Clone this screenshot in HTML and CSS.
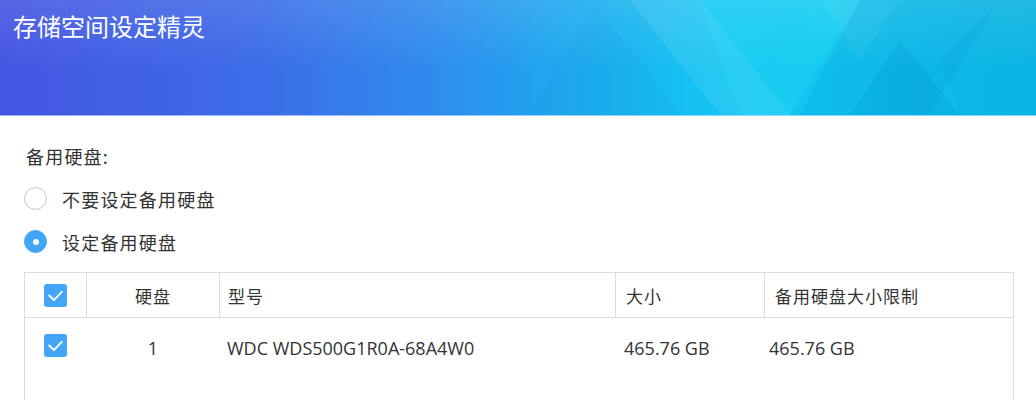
FILE: index.html
```html
<!DOCTYPE html>
<html lang="zh-CN">
<head>
<meta charset="utf-8">
<title>存储空间设定精灵</title>
<link rel="stylesheet" href="styles.css">
</head>
<body>
<header class="banner">
  <svg class="banner-art" viewBox="0 0 1036 115" preserveAspectRatio="none" aria-hidden="true">
    <polygon points="594,5 530,115 680,115 640,60" fill="#0a6fd0" fill-opacity="0.06"/>
    <polygon points="630,0 700,0 790,115 720,115" fill="#ffffff" fill-opacity="0.08"/>
    <polygon points="700,0 860,0 790,115 740,115" fill="#40f0ff" fill-opacity="0.16"/>
    <polygon points="860,0 1000,0 930,115 800,115" fill="#0070c0" fill-opacity="0.10"/>
    <polygon points="900,40 960,115 850,115" fill="#005fb0" fill-opacity="0.10"/>
    <polygon points="1000,0 1036,0 1036,115 960,115 940,60" fill="#0a90d0" fill-opacity="0.12"/>
    <polygon points="820,0 900,0 860,60" fill="#ffffff" fill-opacity="0.05"/>
  </svg>
  <h1 class="banner-title">存储空间设定精灵</h1>
</header>
<main class="content">
  <div class="row label">备用硬盘:</div>
  <div class="row option">
    <span class="radio"></span>
    <span class="option-text">不要设定备用硬盘</span>
  </div>
  <div class="row option">
    <span class="radio checked"></span>
    <span class="option-text">设定备用硬盘</span>
  </div>
  <div class="table">
    <div class="thead">
      <div class="cell c-check"><span class="checkbox"><svg viewBox="0 0 22 22"><polyline points="5,11 9.5,15.5 17,7.5"/></svg></span></div>
      <div class="cell c-disk sep">硬盘</div>
      <div class="cell c-model sep">型号</div>
      <div class="cell c-size sep">大小</div>
      <div class="cell c-limit sep">备用硬盘大小限制</div>
    </div>
    <div class="tbody">
      <div class="trow">
        <div class="cell c-check"><span class="checkbox"><svg viewBox="0 0 22 22"><polyline points="5,11 9.5,15.5 17,7.5"/></svg></span></div>
        <div class="cell c-disk num">1</div>
        <div class="cell c-model num">WDC WDS500G1R0A-68A4W0</div>
        <div class="cell c-size num">465.76 GB</div>
        <div class="cell c-limit num">465.76 GB</div>
      </div>
    </div>
  </div>
</main>
</body>
</html>
```

FILE: styles.css
```css
* { box-sizing: border-box; }
html, body { margin: 0; padding: 0; background: #fff; }
body {
  font-family: "Noto Sans CJK SC", "Noto Sans", sans-serif;
  color: #333;
  height: 400px;
  overflow: hidden;
}
.banner {
  position: relative;
  height: 116px;
  border-bottom: 1px solid rgba(200, 225, 255, 0.6);
  background:
    linear-gradient(180deg, rgba(255,255,255,0.10) 0%, rgba(255,255,255,0) 60%),
    linear-gradient(90deg, #4455e2 0%, #3d6ce8 25%, #2f8cee 42%, #1eaaf0 55%, #14c3f2 68%, #10c6ef 80%, #0cb8e6 100%);
  overflow: hidden;
}
.banner-art {
  position: absolute;
  left: 0; top: 0;
  width: 100%; height: 100%;
}
.banner-title {
  position: relative;
  margin: 0;
  padding: 12px 0 0 13px;
  font-size: 24px;
  line-height: 28px;
  font-weight: 400;
  color: #fff;
}
.content {
  padding: 18px 0 0 24px;
}
.row {
  height: 43px;
  display: flex;
  align-items: center;
  font-size: 18px;
  letter-spacing: 1.2px;
}
.label { padding-left: 2px; }
.radio {
  width: 23px; height: 23px;
  border-radius: 50%;
  border: 1.5px solid #c4c4c4;
  background: #fff;
  margin-right: 15px;
  flex: none;
  display: flex;
  align-items: center;
  justify-content: center;
}
.radio.checked {
  border-color: #42a5f5;
  background: #42a5f5;
}
.radio.checked::after {
  content: "";
  width: 6px; height: 6px;
  border-radius: 50%;
  background: #fff;
}
.table {
  margin-top: 9px;
  width: 990px;
  border: 1px solid #dcdcdc;
  border-bottom: none;
}
.thead, .trow {
  display: grid;
  grid-template-columns: 61px 133px 396px 149px 249px;
}
.thead {
  height: 45px;
  border-bottom: 1px solid #dcdcdc;
}
.cell {
  display: flex;
  align-items: center;
  font-size: 17px;
  letter-spacing: 1px;
  padding-left: 8px;
  color: #333;
}
.thead .cell { height: 44px; }
.sep { border-left: 1px solid #dcdcdc; }
.c-check { justify-content: center; padding-left: 0; }
.c-disk { justify-content: center; padding-left: 0; }
.c-size, .c-limit { padding-left: 10px; }
.tbody { height: 82px; }
.trow .cell { height: 58px; padding-top: 1px; }
.trow .c-check { padding-top: 0; padding-bottom: 4px; }
.trow .c-disk { padding-left: 1px; }
.trow .c-size { padding-left: 9px; }
.trow .c-limit { padding-left: 5px; }
.num {
  font-family: "Open Sans", "Noto Sans CJK SC", sans-serif;
  font-size: 18px;
  letter-spacing: 0;
  color: #333;
}
.checkbox {
  width: 23px; height: 23px;
  border-radius: 3px;
  background: #42a5f5;
  display: flex;
}
.checkbox svg {
  width: 100%; height: 100%;
}
.checkbox polyline {
  fill: none;
  stroke: #fff;
  stroke-width: 1.8;
  stroke-linecap: round;
  stroke-linejoin: round;
}
```
